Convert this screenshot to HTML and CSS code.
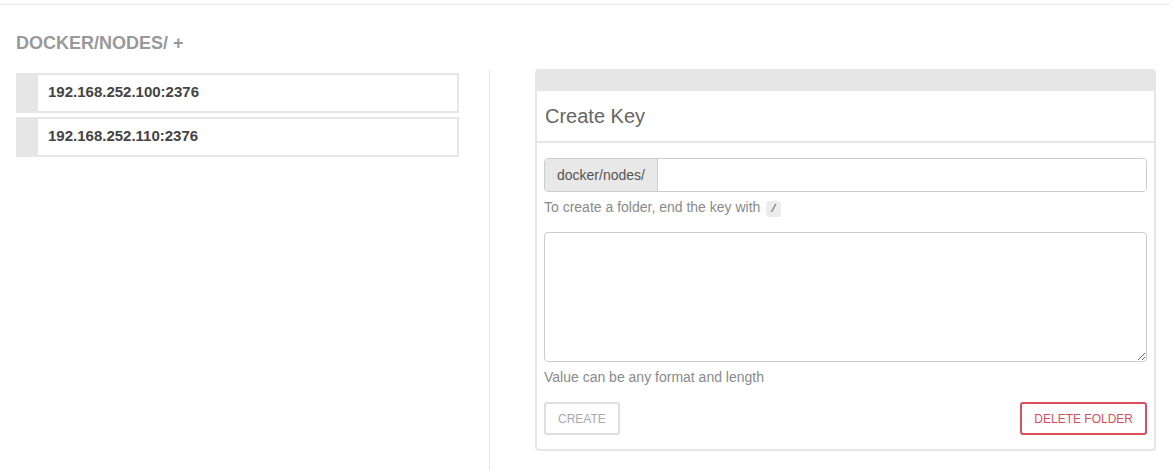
FILE: index.html
```html
<!DOCTYPE html>
<html>
<head>
<meta charset="utf-8">
<link rel="stylesheet" href="styles.css">
</head>
<body>
<div class="topbar"></div>
<div class="page">
  <h2 class="crumb">DOCKER/NODES/ +</h2>
  <div class="row">
    <div class="left">
      <div class="item"><span class="handle"></span><span class="label">192.168.252.100:2376</span></div>
      <div class="item"><span class="handle"></span><span class="label">192.168.252.110:2376</span></div>
    </div>
    <div class="divider"></div>
    <div class="panel">
      <div class="panel-top"></div>
      <div class="panel-title">Create Key</div>
      <div class="panel-body">
        <div class="input-group">
          <span class="addon">docker/nodes/</span>
          <input class="key" type="text">
        </div>
        <p class="help">To create a folder, end the key with <code class="code">/</code></p>
        <textarea class="value"></textarea>
        <p class="help help2">Value can be any format and length</p>
        <div class="actions">
          <button class="btn btn-create">CREATE</button>
          <button class="btn btn-delete">DELETE FOLDER</button>
        </div>
      </div>
    </div>
  </div>
</div>
</body>
</html>
```
FILE: styles.css
```css
html, body {
  margin: 0;
  padding: 0;
  background: #fff;
  font-family: "Liberation Sans", Arial, sans-serif;
}
.topbar {
  height: 4px;
  width: 1170px;
  border-bottom: 1px solid #e9e9e9;
}
.page {
  padding-left: 16px;
}
.crumb {
  margin: 27px 0 15px 0;
  font-size: 18px;
  line-height: 22px;
  font-weight: bold;
  color: #999;
}
.row {
  display: flex;
  align-items: stretch;
  height: 401px;
}
.left {
  width: 443px;
  padding-top: 4px;
  box-sizing: border-box;
}
.item {
  display: flex;
  align-items: center;
  height: 40px;
  box-sizing: border-box;
  border: 2px solid #e6e6e6;
  margin-bottom: 4px;
}
.handle {
  width: 20px;
  align-self: stretch;
  background: #e6e6e6;
}
.label {
  padding-left: 10px;
  margin-bottom: 3px;
  font-size: 15px;
  font-weight: bold;
  color: #444;
}
.divider {
  width: 1px;
  background: #e6e6e6;
  margin-left: 30px;
  margin-right: 45px;
}
.panel {
  width: 621px;
  height: 382px;
  box-sizing: border-box;
  border: 2px solid #e6e6e6;
  border-radius: 4px;
  display: flex;
  flex-direction: column;
}
.panel-top {
  height: 20px;
  background: #e6e6e6;
}
.panel-title {
  height: 50px;
  line-height: 50px;
  padding-left: 8px;
  font-size: 20px;
  color: #666;
  border-bottom: 2px solid #e6e6e6;
}
.panel-body {
  padding: 15px 7px 13px 7px;
}
.input-group {
  display: flex;
  height: 34px;
  box-sizing: border-box;
  border: 1px solid #ccc;
  border-radius: 4px;
  overflow: hidden;
}
.addon {
  display: flex;
  align-items: center;
  padding: 0 12px;
  background: #e8e8e8;
  border-right: 1px solid #ccc;
  font-size: 14px;
  color: #555;
  width: 88px;
}
.key {
  flex: 1;
  border: none;
  outline: none;
  margin: 0;
  padding: 0 12px;
  font-size: 14px;
}
.help {
  margin: 5px 0 0 0;
  font-size: 14px;
  line-height: 20px;
  color: #8a8a8a;
}
.code {
  font-family: "Liberation Mono", monospace;
  font-size: 11px;
  background: #ececec;
  color: #555;
  padding: 2px 4px;
  border-radius: 3px;
  margin-left: 2px;
}
.value {
  display: block;
  margin-top: 13px;
  width: 100%;
  height: 130px;
  box-sizing: border-box;
  border: 1px solid #ccc;
  border-radius: 4px;
  resize: vertical;
  font-family: "Liberation Sans", Arial, sans-serif;
}
.help2 {
  margin-top: 5px;
}
.actions {
  display: flex;
  justify-content: space-between;
  margin-top: 15px;
}
.btn {
  height: 33px;
  box-sizing: border-box;
  padding: 0 12px;
  background: #fff;
  border-radius: 3px;
  font-family: "Liberation Sans", Arial, sans-serif;
  font-size: 12px;
}
.btn-create {
  border: 2px solid #dedede;
  color: #aaa;
}
.btn-delete {
  border: 2px solid #d9505c;
  color: #d9505c;
}
```
